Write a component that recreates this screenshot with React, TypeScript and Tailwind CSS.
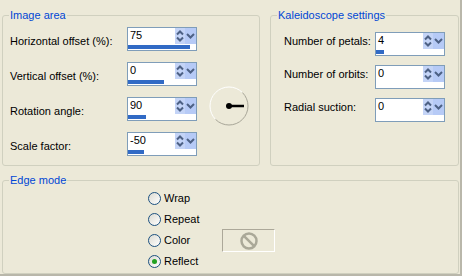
import React from "react";

type Row = { label: string; value: string; bar: number };

const imageRows: Row[] = [
  { label: "Horizontal offset (%):", value: "75", bar: 62 },
  { label: "Vertical offset (%):", value: "0", bar: 36 },
  { label: "Rotation angle:", value: "90", bar: 18 },
  { label: "Scale factor:", value: "-50", bar: 16 },
];

const kaleidoRows: Row[] = [
  { label: "Number of petals:", value: "4", bar: 8 },
  { label: "Number of orbits:", value: "0", bar: 0 },
  { label: "Radial suction:", value: "0", bar: 0 },
];

const edgeModes = ["Wrap", "Repeat", "Color", "Reflect"];

function SpinBox({ value, bar }: { value: string; bar: number }) {
  return (
    <div className="w-[70px] h-[24px] border border-[#7F9DB9] bg-white flex flex-col shrink-0">
      <div className="flex h-[17px]">
        <span className="flex-1 pl-[2px] leading-[15px] text-[11px] text-black">{value}</span>
        <div className="w-[10px] h-[16px] bg-[#C4D4F7] flex items-center justify-center">
          <svg width="10" height="16" viewBox="0 0 10 16">
            <polyline points="2,6.5 5,3.5 8,6.5" fill="none" stroke="#4D6185" strokeWidth="2" />
            <polyline points="2,9.5 5,12.5 8,9.5" fill="none" stroke="#4D6185" strokeWidth="2" />
          </svg>
        </div>
        <div className="w-[11px] h-[16px] bg-[#B6CAF6] flex items-center justify-center">
          <svg width="11" height="16" viewBox="0 0 11 16">
            <polyline points="2,6 5.5,9.5 9,6" fill="none" stroke="#4D6185" strokeWidth="2" />
          </svg>
        </div>
      </div>
      <div className="h-[5px]">
        {bar > 0 && <div className="h-[4px] bg-[#316AC5]" style={{ width: bar }} />}
      </div>
    </div>
  );
}

function Dial() {
  return (
    <svg width="40" height="40" viewBox="0 0 40 40">
      <path d="M6.56 33.44 A19 19 0 0 1 33.44 6.56" fill="none" stroke="#ffffff" strokeWidth="1" />
      <path d="M33.44 6.56 A19 19 0 0 1 6.56 33.44" fill="none" stroke="#A8A698" strokeWidth="1" />
      <line x1="20" y1="20" x2="35" y2="20" stroke="#000" strokeWidth="2.5" />
      <circle cx="20" cy="20" r="3" fill="#000" />
    </svg>
  );
}

function Radio({ label, checked }: { label: string; checked: boolean }) {
  return (
    <div className="flex items-center h-[21px]">
      <span className="w-[13px] h-[13px] rounded-full border border-[#1C5180] bg-linear-to-br from-[#DCDBD2] to-white flex items-center justify-center shrink-0">
        {checked && <span className="w-[5px] h-[5px] rounded-full bg-[#21A121]" />}
      </span>
      <span className="ml-[3px] w-[58px]">{label}</span>
      {label === "Color" && (
        <div className="w-[53px] h-[23px] border-t border-l border-[#ACA899] border-r-white border-b-white border-r border-b flex items-center justify-center">
          <svg width="20" height="20" viewBox="0 0 20 20">
            <circle cx="10" cy="10" r="7.5" fill="none" stroke="#AAA898" strokeWidth="2.5" />
            <line x1="4.8" y1="4.8" x2="15.2" y2="15.2" stroke="#AAA898" strokeWidth="2.5" />
          </svg>
        </div>
      )}
    </div>
  );
}

export default function App() {
  return (
    <div className="w-[462px] h-[276px] bg-[#ECE9D8] overflow-hidden font-['Liberation_Sans',Arial,sans-serif] text-[11px] text-black pl-[2px] pt-[9px] border-r-2 border-b-2 border-[#B9B7AA]">
      <div className="flex gap-[10px]">
        <fieldset className="w-[258px] h-[157px] border border-[#D0D0BF] rounded-[3px] pl-[6px] pt-[5px]">
          <legend className="px-[1px] leading-[13px] text-[#0046D5]">Image area</legend>
          <div className="flex pl-[1px]">
            <div className="flex flex-col gap-[11px]">
              {imageRows.map((r) => (
                <div key={r.label} className="flex">
                  <span className="w-[117px] mt-[8px] leading-[13px]">{r.label}</span>
                  <SpinBox value={r.value} bar={r.bar} />
                </div>
              ))}
            </div>
            <div className="ml-[12px] mt-[59px]">
              <Dial />
            </div>
          </div>
        </fieldset>
        <fieldset className="w-[189px] h-[157px] border border-[#D0D0BF] rounded-[3px] pl-[6px] pt-[10px]">
          <legend className="px-[1px] leading-[13px] text-[#0046D5]">Kaleidoscope settings</legend>
          <div className="flex flex-col gap-[9px] pl-[7px]">
            {kaleidoRows.map((r) => (
              <div key={r.label} className="flex">
                <span className="w-[91px] mt-[3px] leading-[13px]">{r.label}</span>
                <SpinBox value={r.value} bar={r.bar} />
              </div>
            ))}
          </div>
        </fieldset>
      </div>
      <fieldset className="mt-[8px] w-[457px] h-[100px] border border-[#D0D0BF] rounded-[3px] pl-[6px] pt-[1px]">
        <legend className="px-[1px] leading-[13px] text-[#0046D5]">Edge mode</legend>
        <div className="ml-[139px] flex flex-col">
          {edgeModes.map((m) => (
            <Radio key={m} label={m} checked={m === "Reflect"} />
          ))}
        </div>
      </fieldset>
    </div>
  );
}
